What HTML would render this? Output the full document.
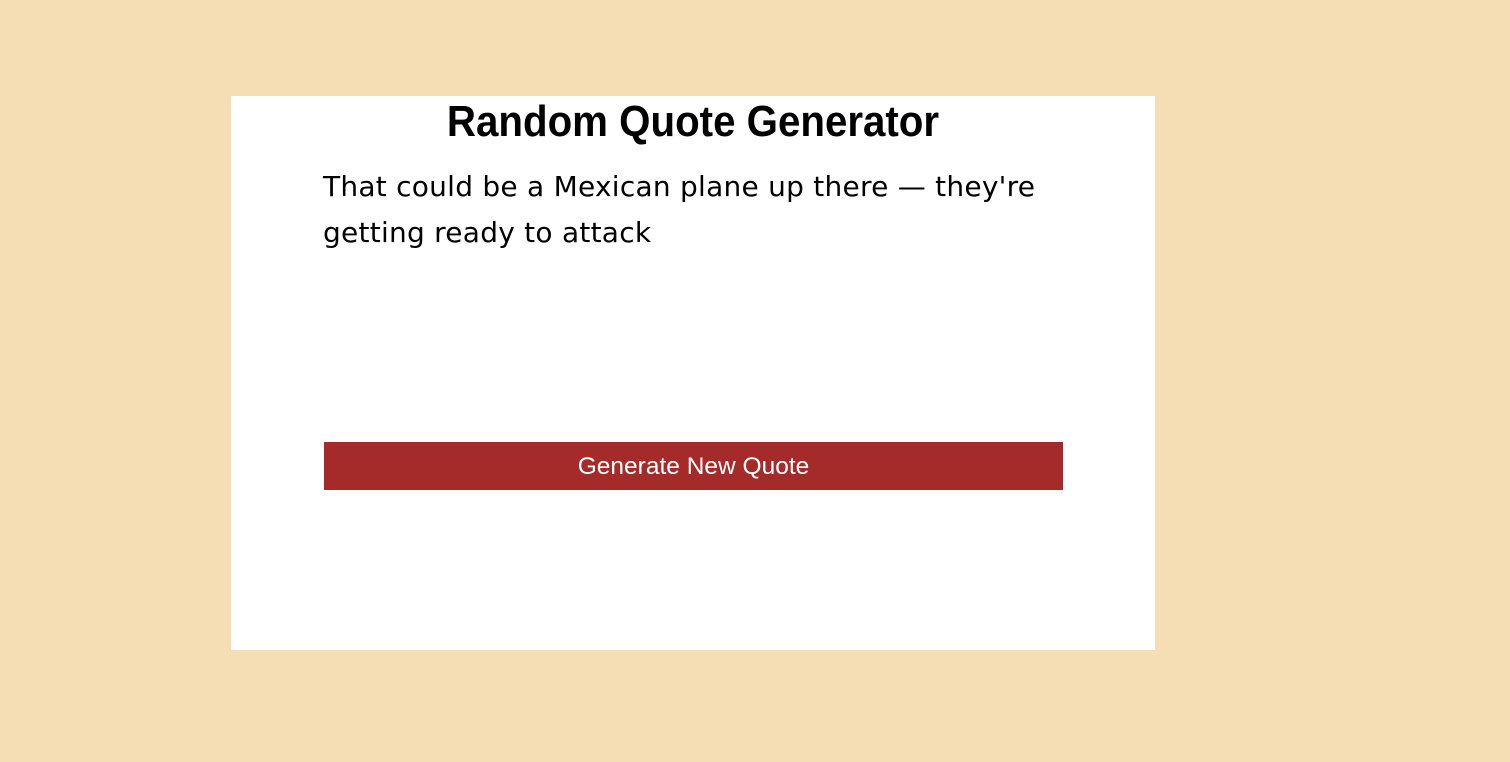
<!DOCTYPE html>
<html><head><style>
html,body{margin:0;padding:0;background:#F5DEB3;width:1510px;height:762px;overflow:hidden}
.box{position:absolute;left:231px;top:96px;width:924px;height:554px;background:#fff}
h1{position:absolute;left:0;top:0;width:924px;margin:0;text-align:center;font-family:"Liberation Sans",sans-serif;font-weight:bold;font-size:44px;line-height:52px;color:#000;transform:scaleX(0.915);transform-origin:462px 0}
.q{position:absolute;left:92px;top:68px;width:760px;font-family:"DejaVu Sans",sans-serif;font-size:28px;letter-spacing:0.25px;line-height:46px;color:#000}
.btn{position:absolute;left:93px;top:346px;width:739px;height:48px;background:#A52A2A;color:#fff;font-family:"Liberation Sans",sans-serif;font-size:24.5px;line-height:49px;text-align:center}
</style></head><body>
<div class="box">
<h1>Random Quote Generator</h1>
<div class="q">That could be a Mexican plane up there — they're getting ready to attack</div>
<div class="btn">Generate New Quote</div>
</div>
</body></html>
